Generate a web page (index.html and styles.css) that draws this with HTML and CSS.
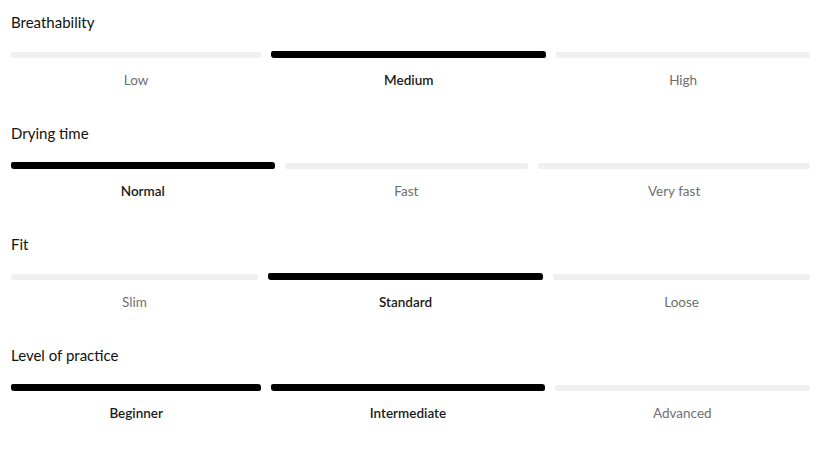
FILE: index.html
```html
<!DOCTYPE html>
<html lang="en">
<head>
<meta charset="utf-8">
<title>Product attributes</title>
<link rel="stylesheet" href="styles.css">
</head>
<body>
<div class="attrs">
  <section class="attr">
    <h3 class="attr-title">Breathability</h3>
    <div class="scale">
      <div class="seg"><span class="bar"></span><span class="label">Low</span></div>
      <div class="seg on"><span class="bar"></span><span class="label">Medium</span></div>
      <div class="seg"><span class="bar"></span><span class="label">High</span></div>
    </div>
  </section>
  <section class="attr">
    <h3 class="attr-title">Drying time</h3>
    <div class="scale">
      <div class="seg on"><span class="bar"></span><span class="label">Normal</span></div>
      <div class="seg"><span class="bar"></span><span class="label">Fast</span></div>
      <div class="seg"><span class="bar"></span><span class="label">Very fast</span></div>
    </div>
  </section>
  <section class="attr">
    <h3 class="attr-title">Fit</h3>
    <div class="scale">
      <div class="seg"><span class="bar"></span><span class="label">Slim</span></div>
      <div class="seg on"><span class="bar"></span><span class="label">Standard</span></div>
      <div class="seg"><span class="bar"></span><span class="label">Loose</span></div>
    </div>
  </section>
  <section class="attr">
    <h3 class="attr-title">Level of practice</h3>
    <div class="scale">
      <div class="seg on"><span class="bar"></span><span class="label">Beginner</span></div>
      <div class="seg on"><span class="bar"></span><span class="label">Intermediate</span></div>
      <div class="seg"><span class="bar"></span><span class="label">Advanced</span></div>
    </div>
  </section>
</div>
</body>
</html>
```
FILE: styles.css
```css
html, body {
  margin: 0;
  padding: 0;
  background: #fff;
}
body {
  font-family: "Lato", "Noto Sans", sans-serif;
  color: #111;
}
.attrs {
  padding: 12px 20px 0 11px;
  display: flex;
  flex-direction: column;
  gap: 34px;
}
.attr-title {
  margin: 0;
  font-size: 15px;
  line-height: 20px;
  font-weight: 400;
  color: #111;
}
.scale {
  margin-top: 20px;
  display: flex;
  gap: 10px;
}
.seg {
  flex: 1 1 auto;
  display: flex;
  flex-direction: column;
  align-items: center;
}
.bar {
  align-self: stretch;
  height: 6px;
  border-radius: 2px;
  background: #f0f0f0;
}
.seg.on .bar {
  background: #000;
  height: 7px;
  margin-top: -1px;
  border-radius: 2px 3px 2px 3px;
}
.label {
  margin-top: 13px;
  font-size: 13.5px;
  line-height: 18px;
  color: #6f6f6f;
}
.seg.on .label {
  color: #1a1a1a;
  font-weight: 600;
}
```
